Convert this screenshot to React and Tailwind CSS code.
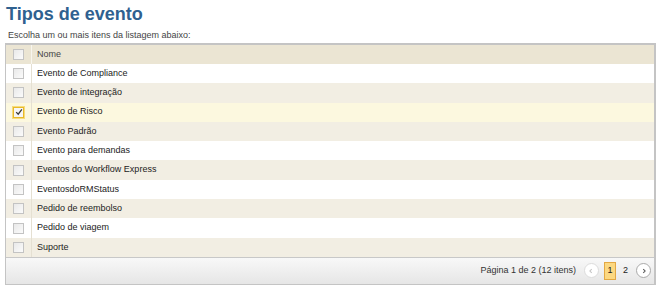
import { useState } from 'react'

const ITEMS = [
  'Evento de Compliance',
  'Evento de integração',
  'Evento de Risco',
  'Evento Padrão',
  'Evento para demandas',
  'Eventos do Workflow Express',
  'EventosdoRMStatus',
  'Pedido de reembolso',
  'Pedido de viagem',
  'Suporte',
]

const Check = ({ checked, onClick }) => (
  <button
    onClick={onClick}
    className={`w-[11px] h-[11px] border flex items-center justify-center ${
      checked
        ? 'border-[#e8b92a] bg-[#f6f6f6] ring-1 ring-[#f7dc7c]'
        : 'border-[#c3c3c3] bg-gradient-to-br from-[#e9e9e9] to-[#fbfbfb]'
    }`}
  >
    {checked && (
      <svg viewBox="0 0 10 10" className="w-[8px] h-[8px]">
        <path d="M1.5 5.2 L4 7.8 L8.6 1.8" fill="none" stroke="#3a3a3a" strokeWidth="1.6" />
      </svg>
    )}
  </button>
)

const Circle = ({ dir, dim }) => (
  <div
    className={`w-[15px] h-[15px] rounded-full border flex items-center justify-center bg-white ${
      dim ? 'border-[#dcdcdc]' : 'border-[#a9a9a9]'
    }`}
  >
    <svg viewBox="0 0 8 8" className="w-[6px] h-[6px]">
      <path
        d={dir === 'left' ? 'M5 1.5 L2.5 4 L5 6.5' : 'M3 1.5 L5.5 4 L3 6.5'}
        fill="none"
        stroke={dim ? '#c4c4c4' : '#555'}
        strokeWidth="1.4"
      />
    </svg>
  </div>
)

export default function App() {
  const [selected, setSelected] = useState({ 2: true })

  return (
    <div className="w-[662px] h-[293px] bg-white font-['Liberation_Sans',Arial,sans-serif] text-[#333] overflow-hidden">
      <h1 className="pl-[6px] pt-[2px] h-[28px] text-[18px] font-bold text-[#2f6190] leading-[24px]">
        Tipos de evento
      </h1>
      <p className="pl-[8px] mt-[1px] text-[9px] leading-[12px] text-[#444]">
        Escolha um ou mais itens da listagem abaixo:
      </p>

      {/* Table */}
      <div className="ml-[5px] mt-[2px] w-[651px] border-t-2 border-x border-[#c4c4c4] border-r-2 border-b">
        <div className="flex h-[19px] bg-[#ebe5d3] text-[9px]">
          <div className="w-[26px] flex items-center justify-center border-r border-[#f8f6ef]">
            <Check checked={false} />
          </div>
          <div className="pl-[5px] flex items-center text-[#444]">Nome</div>
        </div>

        {ITEMS.map((name, i) => {
          const isSel = !!selected[i]
          const bg = isSel ? 'bg-[#fcf8df]' : i % 2 === 1 ? 'bg-[#f2eee3]' : 'bg-white'
          return (
            <div key={name} className={`flex h-[19.3px] text-[9px] ${bg}`}>
              <div className="w-[26px] flex items-center justify-center border-r border-[#e5e0d2]">
                <Check checked={isSel} onClick={() => setSelected({ ...selected, [i]: !isSel })} />
              </div>
              <div className="pl-[5px] flex items-center text-[#222]">{name}</div>
            </div>
          )
        })}

        {/* Footer */}
        <div className="h-[27px] border-t border-[#c8c8c8] bg-gradient-to-b from-[#f8f8f8] to-[#e6e6e6] flex items-center justify-end pr-[3px] text-[9px] text-[#333]">
          <span className="mr-[8px]">Página 1 de 2 (12 itens)</span>
          <Circle dir="left" dim />
          <div className="ml-[5px] w-[12px] h-[18px] bg-[#fcd881] border border-[#e3a844] flex items-center justify-center text-[#222]">
            1
          </div>
          <span className="ml-[7px] mr-[8px] text-[#222]">2</span>
          <Circle dir="right" />
        </div>
      </div>
    </div>
  )
}
